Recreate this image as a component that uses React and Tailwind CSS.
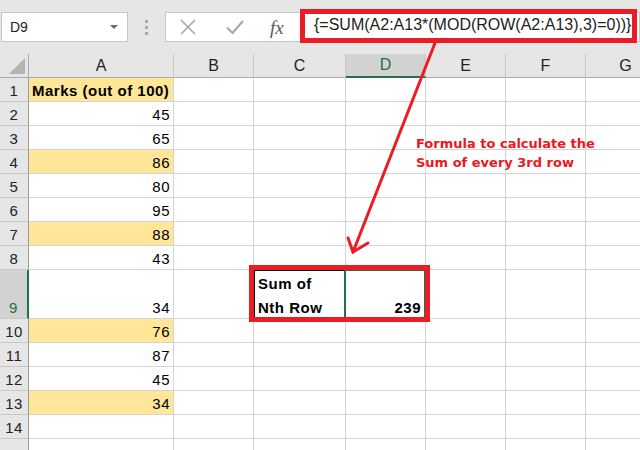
import React from "react";

const rows = [
  { n: 1, v: "Marks (out of 100)", hl: true, bold: true },
  { n: 2, v: "45" },
  { n: 3, v: "65" },
  { n: 4, v: "86", hl: true },
  { n: 5, v: "80" },
  { n: 6, v: "95" },
  { n: 7, v: "88", hl: true },
  { n: 8, v: "43" },
  { n: 9, v: "34", tall: true },
  { n: 10, v: "76", hl: true },
  { n: 11, v: "87" },
  { n: 12, v: "45" },
  { n: 13, v: "34", hl: true },
  { n: 14, v: "" },
  { n: 15, v: "", cut: true },
];

const cols = ["B", "C", "D", "E", "F", "G"];

const cell = "border-r border-b border-[#d4d4d4] flex items-end pb-[2px] leading-[17px] tracking-[0.5px]";

function Toolbar() {
  return (
    <div className="h-[54px] bg-[#e6e6e6] flex items-start pt-[12px]">
      {/* name box */}
      <div className="ml-[1px] w-[127px] h-[30px] bg-white border border-[#c6c6c6] flex items-center justify-between pl-[8px] pr-[9px]">
        <span className="text-[14px] text-[#222]">D9</span>
        <span className="w-0 h-0 border-l-[4px] border-r-[4px] border-t-[4px] border-l-transparent border-r-transparent border-t-[#6b6b6b]" />
      </div>
      {/* grip dots */}
      <div className="w-[37px] h-[30px] flex flex-col items-center justify-center gap-[3px]">
        <span className="w-[3px] h-[3px] bg-[#a8a8a8]" />
        <span className="w-[3px] h-[3px] bg-[#a8a8a8]" />
        <span className="w-[3px] h-[3px] bg-[#a8a8a8]" />
      </div>
      {/* cancel / enter / fx */}
      <div className="w-[136px] h-[30px] bg-white border border-[#c6c6c6] border-r-0 flex items-center">
        <svg width="18" height="18" viewBox="0 0 18 18" className="ml-[13px]">
          <path d="M2 2L16 16M16 2L2 16" stroke="#a9a9a9" strokeWidth="1.6" />
        </svg>
        <svg width="20" height="18" viewBox="0 0 20 18" className="ml-[28px]">
          <path d="M2 9.5L7.5 15L18 3" stroke="#a9a9a9" strokeWidth="2.2" fill="none" />
        </svg>
        <span className="ml-[25px] font-['Liberation_Serif'] italic text-[19px] text-[#5a5a5a] leading-none">fx</span>
      </div>
      {/* formula input */}
      <div className="flex-1 h-[30px] bg-white border border-[#c6c6c6] flex items-center pl-[12px]">
        <span className="text-[16px] text-[#222] leading-[18px] -mt-[4px] whitespace-nowrap">
          {"{=SUM(A2:A13*(MOD(ROW(A2:A13),3)=0))}"}
        </span>
      </div>
    </div>
  );
}

function HeaderRow() {
  return (
    <>
      <div className="h-[24px] bg-[#e6e6e6] border-r border-b border-[#ababab] flex items-end justify-end pr-[3px] pb-[3px]">
        <span className="w-0 h-0 border-l-[16px] border-l-transparent border-b-[16px] border-b-[#b4b4b4]" />
      </div>
      <div className="h-[24px] bg-[#e6e6e6] border-r border-b border-r-[#c8c8c8] border-b-[#ababab] flex items-center justify-center text-[16px] text-[#222]">A</div>
      {cols.map((c) =>
        c === "D" ? (
          <div key={c} className="h-[24px] bg-[#d2d2d2] border-r border-r-[#c8c8c8] border-b-2 border-b-[#217346] flex items-center justify-center text-[16px] text-[#217346]">
            {c}
          </div>
        ) : (
          <div key={c} className="h-[24px] bg-[#e6e6e6] border-r border-b border-r-[#c8c8c8] border-b-[#ababab] flex items-center justify-center text-[16px] text-[#222]">
            {c}
          </div>
        )
      )}
    </>
  );
}

function Row({ r }) {
  const h = r.tall ? "h-[49px]" : "h-[24px]";
  const isSel = r.n === 9;
  return (
    <>
      <div
        className={`${h} flex items-end justify-center pb-[2px] leading-[17px] text-[15px] tracking-[0.5px] border-b border-b-[#c8c8c8] ${
          isSel ? "bg-[#d2d2d2] text-[#217346] border-r-2 border-r-[#217346]" : "bg-[#e6e6e6] text-[#222] border-r border-r-[#9b9b9b]"
        }`}
      >
        {r.cut ? "" : r.n}
      </div>
      <div
        className={`${h} ${cell} px-[3px] text-[15px] text-black ${r.hl ? "bg-[#ffe699]" : "bg-white"} ${
          r.bold ? "font-bold justify-start" : "justify-end"
        }`}
      >
        {r.v}
      </div>
      {cols.map((c) => {
        if (isSel && c === "C") {
          return (
            <div key={c} className={`${h} border border-black bg-white flex flex-col justify-end pl-[3px] pb-[2px] text-[15px] font-bold tracking-[0.5px] text-black`}>
              <span className="leading-[30px]">Sum of</span>
              <span className="leading-[17px]">Nth Row</span>
            </div>
          );
        }
        if (isSel && c === "D") {
          return (
            <div key={c} className={`${h} relative border-r border-b border-[#d4d4d4] bg-white flex items-end justify-end pr-[4px] pb-[2px] leading-[17px] tracking-[0.5px] text-[15px] font-bold text-black`}>
              239
              <div className="absolute -left-[2px] -top-[1px] -right-[1px] -bottom-[1px] border-2 border-[#217346]" />
            </div>
          );
        }
        return <div key={c} className={`${h} ${cell} bg-white`} />;
      })}
    </>
  );
}

export default function App() {
  return (
    <div className="relative w-[640px] h-[450px] overflow-hidden bg-white font-['Liberation_Sans',sans-serif]">
      <Toolbar />
      <div className="grid grid-cols-[29px_145px_80px_92px_80px_80px_80px_80px] w-[665px]">
        <HeaderRow />
        {rows.map((r) => (
          <Row key={r.n} r={r} />
        ))}
      </div>

      {/* annotations */}
      <div className="absolute left-[300px] top-[9px] w-[337px] h-[34px] border-[5px] border-[#ed1c24]" />
      <div className="absolute left-[249px] top-[265px] w-[181px] h-[57px] border-[5px] border-[#ed1c24]" />
      <svg className="absolute left-0 top-0" width="640" height="450">
        <g stroke="#ed1c24" strokeWidth="3" strokeLinecap="round" fill="none">
          <path d="M435 43L353 252" />
          <path d="M348 238L353 252L368 243" />
        </g>
      </svg>
      <div className="absolute left-[416px] top-[134px] font-['DejaVu_Sans',sans-serif] font-bold text-[13px] leading-[19px] text-[#f01620]">
        <div>Formula to calculate the</div>
        <div>Sum of every 3rd row</div>
      </div>
    </div>
  );
}
